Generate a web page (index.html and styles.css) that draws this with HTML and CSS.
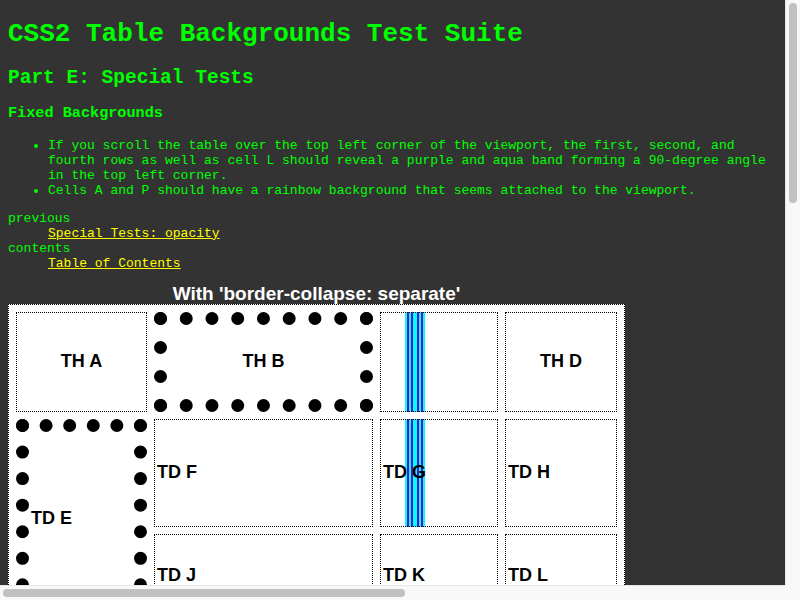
FILE: index.html
```html
<!DOCTYPE html>
<html>
<head>
<meta charset="utf-8">
<title>CSS2 Table Backgrounds Test Suite: Fixed Backgrounds</title>
<link rel="stylesheet" href="styles.css">
</head>
<body>
<div class="viewport">
<main class="page">
<h1 class="title">CSS2 Table Backgrounds Test Suite</h1>
<h2 class="part">Part E: Special Tests</h2>
<h3 class="section">Fixed Backgrounds</h3>
<ul class="notes">
<li>If you scroll the table over the top left corner of the viewport, the first, second, and fourth rows as well as cell L should reveal a purple and aqua band forming a 90-degree angle in the top left corner.</li>
<li>Cells A and P should have a rainbow background that seems attached to the viewport.</li>
</ul>
<dl class="nav">
<dt>previous</dt>
<dd><a href="#">Special Tests: opacity</a></dd>
<dt>contents</dt>
<dd><a href="#">Table of Contents</a></dd>
</dl>
<table class="test">
<caption>With 'border-collapse: separate'</caption>
<tr class="r1">
<th class="c1">TH A</th>
<th class="c2 dots">TH B</th>
<th class="c3 band"></th>
<th class="c4">TH D</th>
</tr>
<tr class="r2">
<td class="c1 dots left" rowspan="2">TD E</td>
<td class="c2 left">TD F</td>
<td class="c3 band left">TD G</td>
<td class="c4 left">TD H</td>
</tr>
<tr class="r3">
<td class="c2 left">TD J</td>
<td class="c3 left">TD K</td>
<td class="c4 left">TD L</td>
</tr>
<tr class="r4">
<td class="c1 left">TD M</td>
<td class="c2 left">TD N</td>
<td class="c3 left">TD O</td>
<td class="c4 left">TD P</td>
</tr>
</table>
</main>
<div class="vbar"><div class="vthumb"></div></div>
<div class="hbar"><div class="hthumb"></div></div>
<div class="corner"></div>
</div>
</body>
</html>
```
FILE: styles.css
```css
html, body {
  margin: 0;
  background: #333333;
}
.viewport {
  display: grid;
  grid-template-columns: 785px 15px;
  grid-template-rows: 585px 15px;
  width: 800px;
  height: 600px;
  overflow: hidden;
}
.page {
  overflow: hidden;
  padding: 0 8px;
  color: #00ff00;
  background: #333333;
  font-family: "Liberation Mono", "DejaVu Sans Mono", monospace;
  font-size: 13px;
}
.title {
  font-size: 26px;
  margin: 18.9px 0 17.4px;
}
.part {
  font-size: 19.5px;
  margin: 18.4px 0 15.2px;
}
.section {
  font-size: 15.2px;
  margin: 15.2px 0;
}
.notes {
  margin: 13px 0;
  padding-left: 40px;
}
.nav {
  margin: 13px 0;
}
.nav dd {
  margin-left: 40px;
}
.nav a {
  color: #ffff00;
}
.test {
  border: 1px dotted #000;
  border-spacing: 7px;
  background: #fff;
  color: #000;
  font-family: "Liberation Sans", Arial, sans-serif;
  font-size: 18px;
  font-weight: bold;
}
.test caption {
  color: #fff;
  font-size: 19px;
  font-weight: bold;
  line-height: 20px;
}
.test th,
.test td {
  box-sizing: border-box;
  border: 1px dotted #000;
  padding: 2px;
  text-align: center;
  vertical-align: middle;
}
.test .left {
  text-align: left;
}
.test .dots {
  border: 13px dotted #000;
}
.c1 { width: 131px; }
.c2 { width: 219px; }
.c3 { width: 118px; }
.c4 { width: 112px; }
.r1 { height: 100px; }
.r2 { height: 108px; }
.r3 { height: 84px; }
.r4 { height: 100px; }
.test .band {
  background-image: linear-gradient(to right,
    #00ffff 0 2px, #5a10c8 2px 4px, #00ffff 4px 6px, #5a10c8 6px 8px,
    #00ffff 8px 12px, #5a10c8 12px 14px, #00ffff 14px 16px, #5a10c8 16px 18px,
    #00ffff 18px 20px);
  background-size: 20px 100%;
  background-position: 405px 0;
  background-repeat: repeat-y;
  background-attachment: fixed;
}
.vbar {
  background: #f8f8f8;
  border-left: 1px solid #e6e6e6;
  padding: 3px 3px 0 3px;
}
.vthumb {
  width: 8px;
  height: 200px;
  border-radius: 4px;
  background: #c1c1c1;
}
.hbar {
  background: #f8f8f8;
  border-top: 1px solid #e6e6e6;
  padding: 3px 0 0 3px;
}
.hthumb {
  width: 402px;
  height: 8px;
  border-radius: 4px;
  background: #c1c1c1;
}
.corner {
  background: #f8f8f8;
}
```
